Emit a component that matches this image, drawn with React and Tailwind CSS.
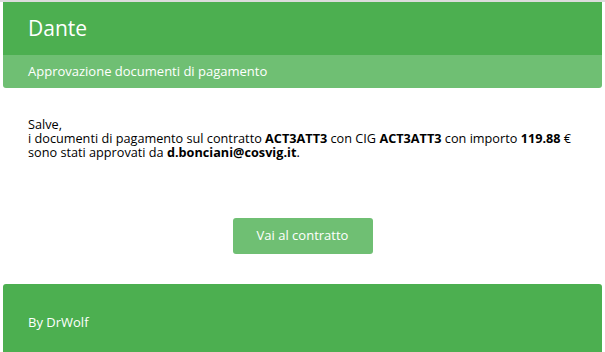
import React from 'react';

const App = () => {
  return (
    <div
      className="w-[605px] h-[352px] bg-white overflow-hidden border-t-2 border-[#dcdcdc]"
      style={{ fontFamily: '"Open Sans", "DejaVu Sans", sans-serif' }}
    >
      {/* Header card */}
      <div className="mx-[3px] rounded-b-[3px] overflow-hidden">
        <div className="bg-[#4caf50] h-[53px] flex items-center px-[25px]">
          <span className="text-white text-[21px] leading-none">Dante</span>
        </div>
        <div className="bg-[#6fbf73] h-[33px] flex items-center px-[25px]">
          <span className="text-white text-[13px]">Approvazione documenti di pagamento</span>
        </div>
      </div>

      {/* Body */}
      <div className="px-[28px] pt-[29px] text-[12.7px] leading-[14px] text-black">
        <p>Salve,</p>
        <p>
          i documenti di pagamento sul contratto <b>ACT3ATT3</b> con CIG <b>ACT3ATT3</b> con importo{' '}
          <b>119.88</b> €
        </p>
        <p>
          sono stati approvati da <b>d.bonciani@cosvig.it</b>.
        </p>
      </div>

      <div className="flex justify-center mt-[59px]">
        <button className="w-[140px] h-[36px] bg-[#6fbf73] text-white text-[13px] rounded-[3px]">
          Vai al contratto
        </button>
      </div>

      {/* Footer */}
      <div className="mx-[3px] mt-[30px] h-[80px] bg-[#4caf50] rounded-t-[3px] px-[25px] pt-[25px]">
        <span className="text-white text-[13px]">By DrWolf</span>
      </div>
    </div>
  );
};

export default App;
